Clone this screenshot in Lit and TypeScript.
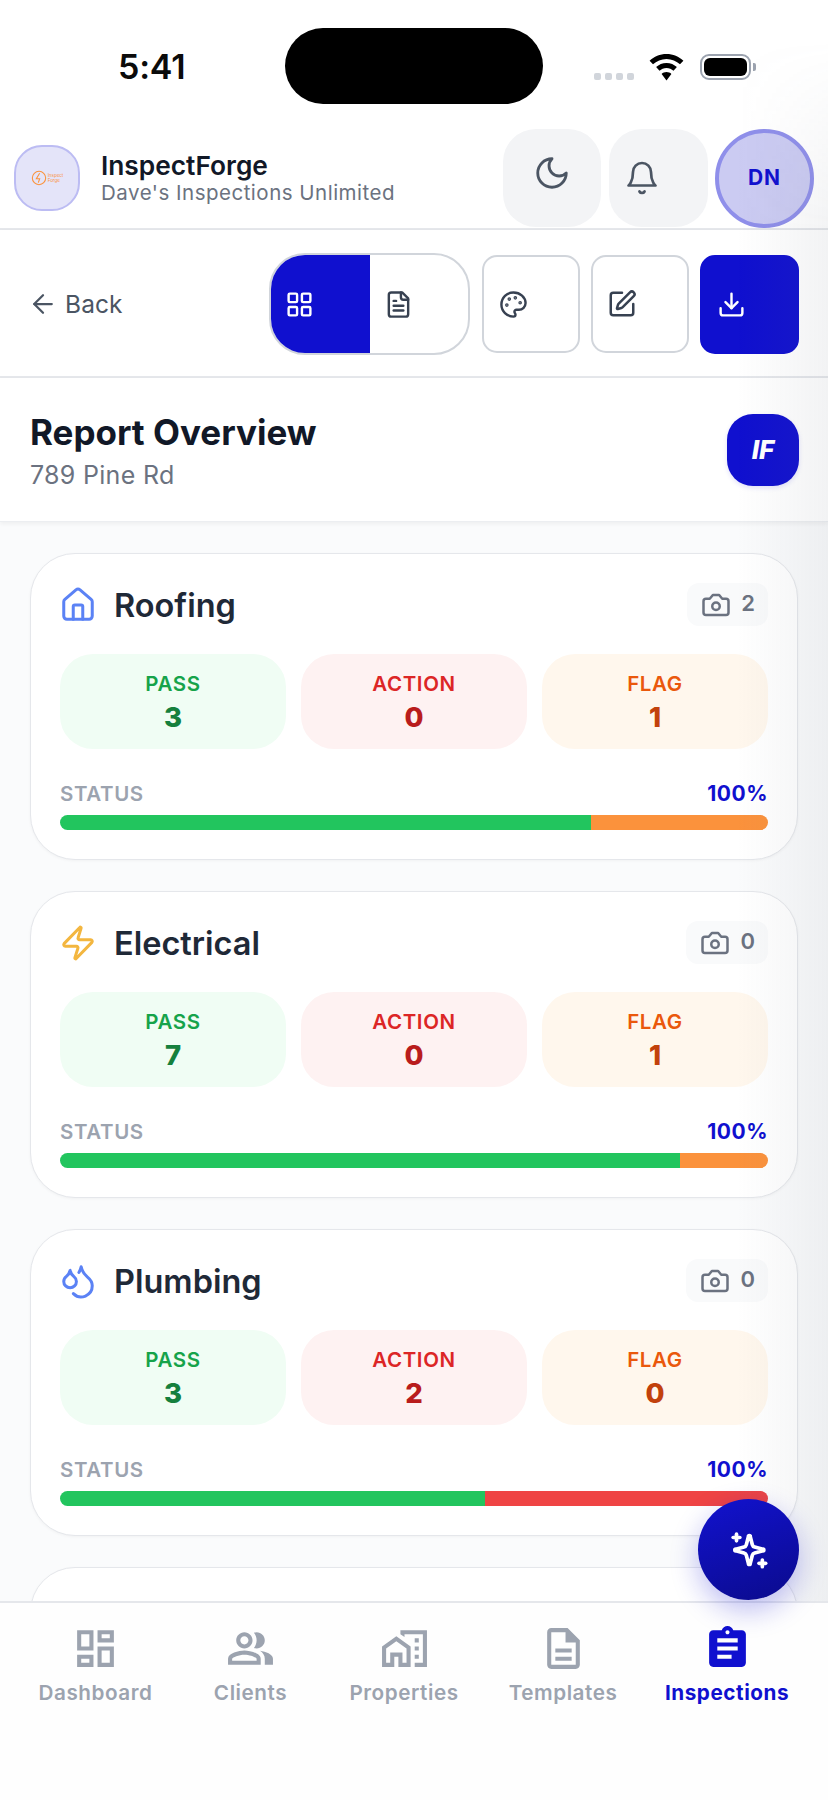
import { LitElement, html, css, svg } from "lit";
import { customElement } from "lit/decorators.js";

const lucide = (body: unknown, size: number, color: string, sw = 2) => html`<svg class="ic" width=${size} height=${size} viewBox="0 0 24 24" fill="none" stroke=${color} stroke-width=${sw} stroke-linecap="round" stroke-linejoin="round">${body}</svg>`;
const mat = (d: string, size: number, color: string) => html`<svg class="ic" width=${size} height=${size} viewBox="0 0 24 24" fill=${color}><path d=${d}></path></svg>`;

const icons = {
  grid: svg`<rect x="3" y="3" width="7" height="7" rx="1"/><rect x="14" y="3" width="7" height="7" rx="1"/><rect x="14" y="14" width="7" height="7" rx="1"/><rect x="3" y="14" width="7" height="7" rx="1"/>`,
  file: svg`<path d="M15 2H6a2 2 0 0 0-2 2v16a2 2 0 0 0 2 2h12a2 2 0 0 0 2-2V7Z"/><path d="M14 2v4a2 2 0 0 0 2 2h4"/><path d="M10 9H8"/><path d="M16 13H8"/><path d="M16 17H8"/>`,
  palette: svg`<circle cx="13.5" cy="6.5" r=".5" fill="currentColor"/><circle cx="17.5" cy="10.5" r=".5" fill="currentColor"/><circle cx="8.5" cy="7.5" r=".5" fill="currentColor"/><circle cx="6.5" cy="12.5" r=".5" fill="currentColor"/><path d="M12 2C6.5 2 2 6.5 2 12s4.5 10 10 10c.926 0 1.648-.746 1.648-1.688 0-.437-.18-.835-.437-1.125-.29-.289-.438-.652-.438-1.125a1.64 1.64 0 0 1 1.668-1.668h1.996c3.051 0 5.555-2.503 5.555-5.554C21.965 6.012 17.461 2 12 2z"/>`,
  pen: svg`<path d="M12 3H5a2 2 0 0 0-2 2v14a2 2 0 0 0 2 2h14a2 2 0 0 0 2-2v-7"/><path d="M18.375 2.625a1 1 0 0 1 3 3l-9.013 9.014a2 2 0 0 1-.853.505l-2.873.84a.5.5 0 0 1-.62-.62l.84-2.873a2 2 0 0 1 .506-.852z"/>`,
  download: svg`<path d="M21 15v4a2 2 0 0 1-2 2H5a2 2 0 0 1-2-2v-4"/><polyline points="7 10 12 15 17 10"/><line x1="12" y1="15" x2="12" y2="3"/>`,
  moon: svg`<path d="M12 3a6 6 0 0 0 9 9 9 9 0 1 1-9-9Z"/>`,
  bell: svg`<path d="M6 8a6 6 0 0 1 12 0c0 7 3 9 3 9H3s3-2 3-9"/><path d="M10.3 21a1.94 1.94 0 0 0 3.4 0"/>`,
  back: svg`<path d="m12 19-7-7 7-7"/><path d="M19 12H5"/>`,
  house: svg`<path d="M15 21v-8a1 1 0 0 0-1-1h-4a1 1 0 0 0-1 1v8"/><path d="M3 10a2 2 0 0 1 .709-1.528l7-5.999a2 2 0 0 1 2.582 0l7 5.999A2 2 0 0 1 21 10v9a2 2 0 0 1-2 2H5a2 2 0 0 1-2-2z"/>`,
  zap: svg`<path d="M4 14a1 1 0 0 1-.78-1.63l9.9-10.2a.5.5 0 0 1 .86.46l-1.92 6.02A1 1 0 0 0 13 10h7a1 1 0 0 1 .78 1.63l-9.9 10.2a.5.5 0 0 1-.86-.46l1.92-6.02A1 1 0 0 0 11 14z"/>`,
  drops: svg`<path d="M7 16.3c2.2 0 4-1.83 4-4.05 0-1.16-.57-2.26-1.71-3.19S7.29 6.75 7 5.3c-.29 1.45-1.14 2.84-2.29 3.76S3 11.1 3 12.25c0 2.22 1.8 4.05 4 4.05z"/><path d="M12.56 6.6A10.97 10.97 0 0 0 14 3.02c.5 2.5 2 4.9 4 6.5s3 3.5 3 5.5a6.98 6.98 0 0 1-11.91 4.97"/>`,
  camera: svg`<path d="M14.5 4h-5L7 7H4a2 2 0 0 0-2 2v9a2 2 0 0 0 2 2h16a2 2 0 0 0 2-2V9a2 2 0 0 0-2-2h-3l-2.5-3z"/><circle cx="12" cy="13" r="3"/>`,
  sparkles: svg`<path d="M10.4 15.2A2 2 0 0 0 9 13.8l-5-1.3a.5.5 0 0 1 0-1l5-1.3a2 2 0 0 0 1.4-1.4l1.3-5a.5.5 0 0 1 1 0l1.3 5a2 2 0 0 0 1.4 1.4l5 1.3a.5.5 0 0 1 0 1l-5 1.3a2 2 0 0 0-1.4 1.4l-1.3 5a.5.5 0 0 1-1 0z"/><path d="M4.5 2.5v4"/><path d="M6.5 4.5h-4"/><path d="M20 18v4"/><path d="M22 20h-4"/>`,
};

const navPaths = {
  dashboard: "M19 5v2h-4V5h4M9 5v6H5V5h4m10 8v6h-4v-6h4M9 17v2H5v-2h4M21 3h-8v6h8V3zM11 3H3v10h8V3zm10 8h-8v10h8V11zm-10 4H3v6h8v-6z",
  clients: "M16.67 13.13C18.04 14.06 19 15.32 19 17v3h4v-3c0-2.18-3.57-3.47-6.33-3.87zM15 12c2.21 0 4-1.79 4-4s-1.79-4-4-4c-.47 0-.91.1-1.33.24C14.5 5.27 15 6.58 15 8s-.5 2.73-1.33 3.76c.42.14.86.24 1.33.24zM9 12c2.21 0 4-1.79 4-4s-1.79-4-4-4-4 1.79-4 4 1.79 4 4 4zm0-6c1.1 0 2 .9 2 2s-.9 2-2 2-2-.9-2-2 .9-2 2-2zM9 13c-2.67 0-8 1.34-8 4v3h16v-3c0-2.66-5.33-4-8-4zm6 5H3v-.99C3.2 16.29 6.3 15 9 15s5.8 1.29 6 2v1z",
  properties: "M1 11v10h6v-5h2v5h6V11L8 6zm12 8h-2v-5H5v5H3v-7l5-3.5 5 3.5zM17 7h2v2h-2zm0 4h2v2h-2zm0 4h2v2h-2zM10 3v1.97l2 1.43V5h9v14h-4v2h6V3z",
  templates: "M8 16h8v2H8zm0-4h8v2H8zm6-10H6c-1.1 0-2 .9-2 2v16c0 1.1.89 2 1.99 2H18c1.1 0 2-.9 2-2V8l-6-6zm4 18H6V4h7v5h5v11z",
  inspections: "M19 3h-4.18C14.4 1.84 13.3 1 12 1c-1.3 0-2.4.84-2.82 2H5c-1.1 0-2 .9-2 2v14c0 1.1.9 2 2 2h14c1.1 0 2-.9 2-2V5c0-1.1-.9-2-2-2zm-7 0c.55 0 1 .45 1 1s-.45 1-1 1-1-.45-1-1 .45-1 1-1zm2 14H7v-2h7v2zm3-4H7v-2h10v2zm0-4H7V7h10v2z",
};

const BLUE = "#1010cf";

const cards = [
  { name: "Roofing", icon: icons.house, color: "#5b82f5", photos: 2, pass: 3, action: 0, flag: 1 },
  { name: "Electrical", icon: icons.zap, color: "#f3b63f", photos: 0, pass: 7, action: 0, flag: 1 },
  { name: "Plumbing", icon: icons.drops, color: "#5b82f5", photos: 0, pass: 3, action: 2, flag: 0 },
];

const navItems = [
  { label: "Dashboard", d: navPaths.dashboard },
  { label: "Clients", d: navPaths.clients },
  { label: "Properties", d: navPaths.properties },
  { label: "Templates", d: navPaths.templates },
  { label: "Inspections", d: navPaths.inspections, active: true },
];

@customElement("app-root")
export class AppRoot extends LitElement {
  static styles = css`
    :host { display: block; width: 828px; height: 1800px; font-family: Inter, "Liberation Sans", sans-serif; --blue: #1010cf; }
    * { box-sizing: border-box; }
    .ic { display: block; flex: none; }
    .screen { position: relative; width: 828px; height: 1800px; overflow: hidden; background: #fff; display: flex; flex-direction: column; }
    .vignette { position: absolute; left: 0; top: 0; width: 828px; height: 1601px; z-index: 3; pointer-events: none;
      background: linear-gradient(to right, rgba(107,114,128,0) 89%, rgba(107,114,128,.085) 100%);
      -webkit-mask-image: linear-gradient(to bottom, transparent 40px, #000 230px); mask-image: linear-gradient(to bottom, transparent 40px, #000 230px); }

    .status { height: 128px; flex: none; display: grid; grid-template-columns: 285px 258px 285px; padding-top: 28px; align-items: start; }
    .time { height: 76px; display: flex; align-items: center; padding-left: 118px; font-size: 34px; font-weight: 600; color: #0b0b0b; letter-spacing: -.2px; }
    .island { height: 76px; border-radius: 38px; background: #000; }
    .sys { height: 52px; display: flex; align-items: center; padding-left: 51px; margin-top: 13px; }
    .dots { display: flex; gap: 4px; margin-top: 19px; margin-right: 15px; }
    .dots i { display: block; width: 7px; height: 7px; border-radius: 2px; background: #d1d5db; }
    .batt { width: 51px; height: 26px; border: 2px solid #9ca3af; border-radius: 9px; padding: 2px; margin-left: 16px; }
    .batt i { display: block; height: 100%; border-radius: 6px; background: #000; }
    .nub { width: 3px; height: 8px; background: #9ca3af; border-radius: 0 2px 2px 0; margin-left: 2px; }

    .header { height: 102px; flex: none; display: flex; align-items: center; padding: 0 14px; border-bottom: 2px solid #e5e7eb; }
    .logo { width: 66px; height: 66px; flex: none; border-radius: 28px; background: #e4e4f9; border: 2px solid #bcbcf3; display: flex; align-items: center; justify-content: center; gap: 1px; }
    .logo-text { font-size: 4.5px; line-height: 5.5px; color: #fb923c; }
    .brand { margin-left: 21px; flex: 1; min-width: 0; }
    .brand-name { font-size: 26.3px; line-height: 30px; font-weight: 600; color: #111827; }
    .brand-sub { font-size: 20.5px; line-height: 24px; color: #6b7280; letter-spacing: .5px; }
    .hbtn { height: 98px; border-radius: 33px; background: #f3f4f6; display: flex; align-items: center; }
    .hbtn.moon { width: 98px; justify-content: center; padding-bottom: 11px; }
    .hbtn.bell { width: 99px; padding-left: 15px; margin-left: 8px; }
    .avatar { width: 99px; height: 99px; margin-left: 7px; padding-bottom: 2px; border-radius: 50%; background: #cbcbf2; border: 4px solid #8f8fea; display: flex; align-items: center; justify-content: center; font-size: 21px; font-weight: 700; color: var(--blue); letter-spacing: .8px; }

    .toolbar { height: 148px; flex: none; display: flex; align-items: center; padding: 2px 29px 0 28px; border-bottom: 2px solid #e5e7eb; background: #fff; box-shadow: 0 1px 3px rgba(0,0,0,.05); position: relative; z-index: 1; }
    .back { display: flex; align-items: center; gap: 7px; font-size: 24.5px; color: #4b5563; flex: 1; letter-spacing: .1px; }
    .seg { width: 201px; height: 102px; border: 2px solid #d1d5db; border-radius: 36px; display: flex; overflow: hidden; }
    .seg > div { width: 50%; display: flex; align-items: center; padding-left: 14px; }
    .seg > .on { background: var(--blue); padding-left: 15px; margin: -1px 0 -1px -1px; width: calc(50% + 1px); }
    .tbtn { width: 98px; height: 98px; margin-left: 11px; border: 2px solid #d1d5db; border-radius: 15px; display: flex; align-items: center; padding-left: 15px; color: #374151; }
    .tbtn.pen { padding-left: 14px; }
    .seg + .tbtn { margin-left: 12px; }
    .tbtn.dl { width: 99px; height: 99px; background: var(--blue); border-color: var(--blue); }

    .title { height: 144px; flex: none; display: flex; align-items: center; justify-content: space-between; padding: 0 29px 0 30px; border-bottom: 1px solid #eceef1; background: #fff; box-shadow: 0 2px 4px rgba(0,0,0,.05); position: relative; z-index: 1; }
    .title h1 { margin: 0; font-size: 35px; line-height: 44px; font-weight: 700; color: #111827; }
    .title p { margin: 5px 0 0; font-size: 25px; line-height: 32px; color: #6b7280; letter-spacing: .3px; }
    .title-text { padding-top: 1px; }
    .if { width: 72px; height: 72px; border-radius: 26px; background: var(--blue); color: #fff; font-style: italic; font-weight: 800; font-size: 26px; display: flex; align-items: center; justify-content: center; box-shadow: 0 2px 5px rgba(17,17,207,.12); }

    .body { flex: 1; min-height: 0; overflow: hidden; background: #fafbfc; padding: 31px 30px 0; display: flex; flex-direction: column; gap: 31px; }
    .card { flex: none; height: 307px; background: #fff; border: 1.5px solid #e5e7eb; border-radius: 45px; padding: 29px 29px 0; box-shadow: 0 1px 3px rgba(0,0,0,.04); }
    .card-head { height: 43px; display: flex; align-items: center; }
    .card-head > .ic { margin-left: -1px; }
    .card-head h2 { margin: 2px 0 0; font-size: 32.5px; font-weight: 600; color: #1f2937; flex: 1; padding-left: 17px; line-height: 43px; }
    .chip { height: 43px; padding: 0 13px 0 14px; background: #f9fafb; border-radius: 12px; display: flex; align-items: center; gap: 10px; font-size: 22px; font-weight: 600; color: #6b7280; }
    .chip span { margin-top: -4px; }
    .stats { display: grid; grid-template-columns: repeat(3, 1fr); gap: 15px; margin-top: 28px; }
    .stat { height: 95px; border-radius: 33px; display: flex; flex-direction: column; align-items: center; padding-top: 17px; }
    .stat b { font-size: 20.5px; line-height: 26px; font-weight: 600; letter-spacing: .65px; }
    .stat strong { font-size: 27.5px; line-height: 34px; font-weight: 800; margin-top: 3px; }
    .pass { background: #f0fdf4; } .pass b { color: #16a34a; } .pass strong { color: #15803d; }
    .action { background: #fef2f2; } .action b { color: #dc2626; } .action strong { color: #b91c1c; }
    .flag { background: #fff7ed; } .flag b { color: #ea580c; } .flag strong { color: #c2410c; }
    .srow { display: flex; justify-content: space-between; align-items: center; margin-top: 32px; height: 24px; font-size: 20.5px; font-weight: 600; color: #9ca3af; letter-spacing: .6px; }
    .srow em { font-style: normal; font-size: 21px; font-weight: 700; color: var(--blue); letter-spacing: .5px; }
    .bar { display: flex; height: 15px; border-radius: 8px; overflow: hidden; margin-top: 10px; }
    .bar i { display: block; height: 100%; }

    .nav { height: 199px; flex: none; border-top: 2px solid #e5e7eb; background: #fefefe; display: grid; grid-template-columns: 179px 131px 176px 142px 186px; padding-left: 6px; position: relative; z-index: 4; }
    .item { display: flex; flex-direction: column; align-items: center; padding-top: 21px; font-size: 20.7px; line-height: 26px; font-weight: 600; color: #9ca3af; letter-spacing: .55px; }
    .item span { margin-top: 7px; }
    .item.active { color: var(--blue); font-weight: 700; }

    .fab { position: absolute; left: 698px; top: 1499px; width: 101px; height: 101px; border-radius: 50%; z-index: 5; background: linear-gradient(160deg, #1212cf, #0b0b8c); display: flex; align-items: center; justify-content: center; box-shadow: 0 10px 28px rgba(17,17,207,.28); }
  `;

  private card(c: (typeof cards)[number]) {
    const total = c.pass + c.action + c.flag;
    const w = (n: number) => `width:${(n / total) * 100}%`;
    return html`<section class="card">
      <div class="card-head">
        ${lucide(c.icon, 38, c.color, 1.9)}
        <h2>${c.name}</h2>
        <div class="chip">${lucide(icons.camera, 30, "#6b7280", 2)}<span>${c.photos}</span></div>
      </div>
      <div class="stats">
        <div class="stat pass"><b>PASS</b><strong>${c.pass}</strong></div>
        <div class="stat action"><b>ACTION</b><strong>${c.action}</strong></div>
        <div class="stat flag"><b>FLAG</b><strong>${c.flag}</strong></div>
      </div>
      <div class="srow"><span>STATUS</span><em>100%</em></div>
      <div class="bar">
        <i style="${w(c.pass)};background:#22c55e"></i>
        <i style="${w(c.action)};background:#ef4444"></i>
        <i style="${w(c.flag)};background:#fb923c"></i>
      </div>
    </section>`;
  }

  render() {
    return html`<div class="screen">
      <div class="status">
        <div class="time">5:41</div>
        <div class="island"></div>
        <div class="sys">
          <div class="dots"><i></i><i></i><i></i><i></i></div>
          <svg class="ic" width="35" height="27" viewBox="0 0 35 27">
            <path d="M17.5 0C11 0 5 2.6.6 6.7l3.4 3.6C7.5 7 12.3 4.9 17.5 4.9S27.5 7 31 10.3l3.4-3.6C30 2.6 24 0 17.5 0z"/>
            <path d="M17.5 9c-4 0-7.7 1.6-10.4 4.1l3.4 3.6c1.8-1.7 4.3-2.8 7-2.8s5.200 1.100 7 2.800l3.400-3.600C25.200 10.600 21.500 9 17.500 9z"/>
            <path d="M17.500 18c-1.900 0-3.600.7-4.900 1.900l4.900 6.600 4.900-6.600c-1.300-1.200-3-1.900-4.900-1.900z"/>
          </svg>
          <div class="batt"><i></i></div>
          <div class="nub"></div>
        </div>
      </div>

      <header class="header">
        <div class="logo">
          <svg class="ic" width="16" height="16" viewBox="0 0 24 24" fill="none" stroke="#fb923c" stroke-width="1.6"><circle cx="12" cy="12" r="10"/><path d="M13 5 8 13h5l-2 6"/></svg>
          <div class="logo-text">Inspect<br />Forge</div>
        </div>
        <div class="brand">
          <div class="brand-name">InspectForge</div>
          <div class="brand-sub">Dave's Inspections Unlimited</div>
        </div>
        <div class="hbtn moon">${lucide(icons.moon, 38, "#4b5563", 1.8)}</div>
        <div class="hbtn bell">${lucide(icons.bell, 36, "#4b5563", 1.8)}</div>
        <div class="avatar">DN</div>
      </header>

      <div class="toolbar">
        <div class="back">${lucide(icons.back, 30, "#4b5563", 1.8)}<span>Back</span></div>
        <div class="seg">
          <div class="on">${lucide(icons.grid, 29, "#fff", 2)}</div>
          <div>${lucide(icons.file, 29, "#374151", 2)}</div>
        </div>
        <div class="tbtn">${lucide(icons.palette, 29, "#374151", 2)}</div>
        <div class="tbtn pen">${lucide(icons.pen, 30, "#374151", 2)}</div>
        <div class="tbtn dl">${lucide(icons.download, 29, "#fff", 2)}</div>
      </div>

      <div class="title">
        <div class="title-text"><h1>Report Overview</h1><p>789 Pine Rd</p></div>
        <div class="if">IF</div>
      </div>

      <main class="body">
        ${cards.map((c) => this.card(c))}
        <section class="card"></section>
      </main>

      <nav class="nav">
        ${navItems.map((n) => html`<div class="item ${n.active ? "active" : ""}">${mat(n.d, 49, n.active ? BLUE : "#9ca3af")}<span>${n.label}</span></div>`)}
      </nav>

      <div class="vignette"></div>
      <div class="fab">${lucide(icons.sparkles, 40, "#fff", 2.2)}</div>
    </div>`;
  }
}
